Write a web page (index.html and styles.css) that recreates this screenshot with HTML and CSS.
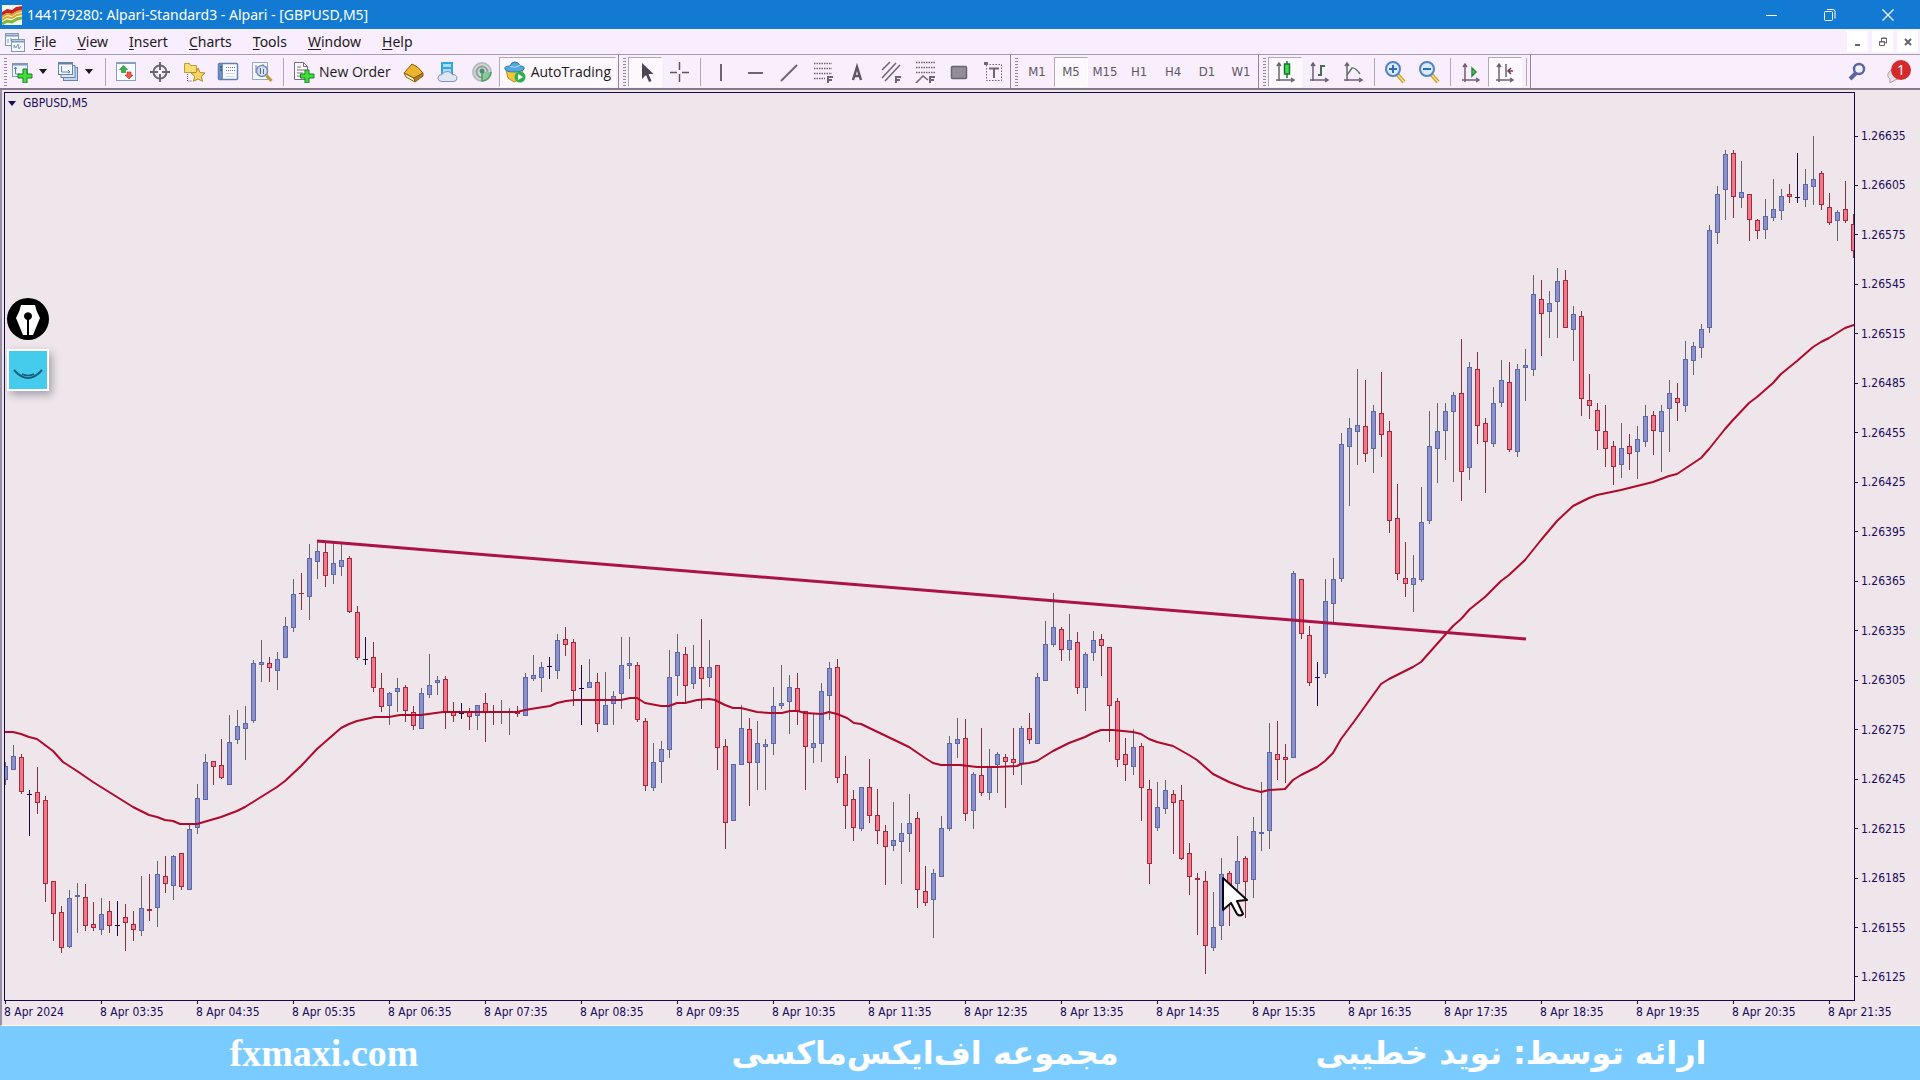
FILE: index.html
```html
<!DOCTYPE html>
<html lang="en">
<head>
  <meta charset="UTF-8">
  <meta name="viewport" content="width=device-width, initial-scale=1.0">
  <title>144179280: Alpari-Standard3 - Alpari - [GBPUSD,M5]</title>
  <link rel="stylesheet" href="styles.css">
</head>
<body>
  <header class="titlebar">
    <svg class="app-icon" width="20" height="20" viewBox="0 0 20 20">
      <rect width="20" height="20" fill="#f4f6e4"/>
      <path d="M0 7l5-3 5 1 4-3 6-1v4l-5 1-5 3-5-1-5 3z" fill="#c8202c"/>
      <path d="M0 12l5-3 5 1 5-3 5-1M0 15l5-3 5 1 5-3 5-1" stroke="#d8a82c" stroke-width="2" fill="none"/>
      <path d="M0 19l5-3 5 1 5-3 5-1" stroke="#7cb83c" stroke-width="3" fill="none"/>
    </svg>
    <h1>144179280: Alpari-Standard3 - Alpari - [GBPUSD,M5]</h1>
    <div class="window-buttons">
      <button aria-label="Minimize"><svg width="12" height="12"><path d="M0 6.5h11" stroke="#fff"/></svg></button>
      <button aria-label="Restore"><svg width="12" height="12" fill="none" stroke="#fff"><rect x=".5" y="2.5" width="8" height="9" rx="1"/><path d="M3 .5h6q2 0 2 2v7"/></svg></button>
      <button aria-label="Close"><svg width="12" height="12"><path d="M.5 .5l11 11M11.500 .5l-11 11" stroke="#fff" stroke-width="1.200"/></svg></button>
    </div>
  </header>

  <nav class="menubar">
    <svg class="menu-icon" width="20" height="20" viewBox="0 0 20 20" fill="#f6faff" stroke="#7d98bd">
      <rect x=".5" y="1.500" width="13" height="12"/><path d="M.5 3.500h13" stroke-width="2"/>
      <path d="M3 11V7M6 9V6"/>
      <rect x="6.500" y="7.500" width="13" height="12"/><path d="M6.500 9.500h13" stroke-width="2"/>
      <path d="M9 16v-3l2 3 2-4 1 5 2-3" fill="none"/>
    </svg>
    <button><u>F</u>ile</button>
    <button><u>V</u>iew</button>
    <button><u>I</u>nsert</button>
    <button><u>C</u>harts</button>
    <button><u>T</u>ools</button>
    <button><u>W</u>indow</button>
    <button><u>H</u>elp</button>
    <div class="child-buttons">
      <button aria-label="Minimize chart"><svg width="10" height="10"><path d="M2 8h5" stroke="#6a6270" stroke-width="2"/></svg></button>
      <button aria-label="Restore chart"><svg width="10" height="10" fill="none" stroke="#6a6270"><path d="M3.500 4V1h5v5H7M3 1.500h6"/><path d="M1.500 4.500h5v4h-5zM1 5h6"/></svg></button>
      <button aria-label="Close chart"><svg width="10" height="10"><path d="M2 2l6 6M8 2l-6 6" stroke="#6a6270" stroke-width="2"/></svg></button>
    </div>
  </nav>

  <div class="toolbar">
    <div class="group">
      <span class="grip"></span>
      <button class="drop" aria-label="New chart">
        <svg width="22" height="22" viewBox="0 0 22 22">
          <rect x="1.500" y="2.500" width="15" height="13" fill="#f2f6fc" stroke="#7d9ab8"/><path d="M1 3.500h16" stroke="#7d9ab8" stroke-width="2"/>
          <path d="M4.500 6v7h4M3 8l1.500-2L6 8" fill="none" stroke="#5c86a8"/>
          <path d="M12 8h4v5h5v4h-5v5h-4v-5H7v-4h5z" fill="#3fe03a" stroke="#1d7c22"/>
        </svg>
        <span class="arrow"></span>
      </button>
      <button class="drop" aria-label="Profiles">
        <svg width="22" height="22" viewBox="0 0 22 22" stroke="#6484ae">
          <rect x="6.500" y="6.500" width="14" height="13" fill="#c4d4ea"/>
          <rect x="4" y="4.500" width="14" height="12" fill="#dce6f4"/>
          <rect x="1.500" y="1.500" width="14" height="12" fill="#f4f8fd"/><path d="M1 2.500h15" stroke-width="2"/>
          <path d="M4.500 5v6h8M11 9l2 2-2 1" fill="none"/>
        </svg>
        <span class="arrow"></span>
      </button>
      <span class="sep"></span>
      <button aria-label="Market Watch">
        <svg width="22" height="22" viewBox="0 0 22 22">
          <rect x="1.500" y="1.500" width="19" height="18" fill="#f8fbff" stroke="#86a0c4"/><path d="M1 2h20" stroke="#86a0c4" stroke-width="2"/>
          <path d="M8.500 4.500l4 4h-2v3h-4v-3h-2z" fill="#35b548" stroke="#1b7a2a" stroke-width=".6"/>
          <path d="M14 18l4-4h-2v-3h-4v3h-2z" fill="#ee5a44" stroke="#a8281c" stroke-width=".6"/>
        </svg>
      </button>
      <button aria-label="Data Window">
        <svg width="22" height="22" viewBox="0 0 22 22" fill="none" stroke="#6c6872" stroke-width="2">
          <circle cx="11" cy="11" r="6.500"/><path d="M11 1v8M11 13v8M1 11h8M13 11h8"/>
        </svg>
      </button>
      <button aria-label="Navigator">
        <svg width="22" height="22" viewBox="0 0 22 22">
          <path d="M1.500 2.500h5l1 2h6v7h-12z" fill="#f7dd76" stroke="#c29a2c"/>
          <path d="M4.500 13v7h4" stroke="#555" stroke-dasharray="1 1" fill="none"/>
          <path d="M15 7l2 4.500 5 .5-3.700 3.300 1.200 5L15 18l-4.500 2.300 1.200-5L8 12l5-.5z" fill="#f9d667" stroke="#b98a22"/>
        </svg>
      </button>
      <button aria-label="Terminal">
        <svg width="22" height="22" viewBox="0 0 22 22">
          <rect x="1.500" y="2.500" width="19" height="16" rx="1" fill="#fbfdff" stroke="#5c7fb4" stroke-width="1.500"/>
          <path d="M4 3v15" stroke="#6c8fc8" stroke-width="4"/><path d="M3 6h2M3 9h2" stroke="#234"/>
          <path d="M9 6.500h9M9 9.500h9" stroke="#777" stroke-dasharray="1 1"/><path d="M9 12.500h9M9 15.500h9" stroke="#ccd6e6"/>
        </svg>
      </button>
      <button aria-label="Strategy Tester">
        <svg width="22" height="22" viewBox="0 0 22 22" fill="none">
          <rect x="1.500" y="1.500" width="15" height="17" fill="#f5f8fd" stroke="#9aa8c0"/>
          <path d="M5 4v8M8 6v7M12 3v5" stroke="#879" />
          <circle cx="11" cy="10" r="5.500" fill="#cfe0f6" fill-opacity=".8" stroke="#7a8fb8" stroke-width="1.500"/>
          <path d="M9.500 7v6M12.500 8v5" stroke="#667"/>
          <path d="M15.500 14.500l5 5.500" stroke="#c09a34" stroke-width="3"/>
        </svg>
      </button>
      <span class="sep"></span>
      <button class="text-button">
        <svg width="22" height="22" viewBox="0 0 22 22">
          <path d="M1.500 1.500h9l4 4v13h-13z" fill="#fbfbfd" stroke="#77707e"/><path d="M10.500 1.500v4h4M4 6h4M4 9h8M4 12h6M4 15h4" fill="none" stroke="#77707e"/>
          <path d="M12 9h4v4h5v4h-5v5h-4v-5H7.500v-4H12z" fill="#3fe03a" stroke="#1d7c22"/>
        </svg>
        New Order
      </button>
      <button aria-label="MetaEditor">
        <svg width="22" height="22" viewBox="0 0 22 22" stroke="#8a5e0c">
          <path d="M1 12l2 4 9 5-1-4z" fill="#fff3cf"/><path d="M1 12L9 3q6 2 11 9l-9 5z" fill="#edb32e"/><path d="M11 17l9-5v3l-8 6z" fill="#b57d14"/>
        </svg>
      </button>
      <button aria-label="Virtual Hosting">
        <svg width="22" height="22" viewBox="0 0 22 22">
          <path d="M4 1h12v12H4z" fill="#35a4e2"/><path d="M6 3h8v3H6zM6 8h8v4H6z" fill="#a8def8"/>
          <path d="M5 20.500q-4 0-4-3.500t4-3.500q2-3.500 6-3 3 0 4 3 5 0 5 3.500t-4 3.500z" fill="#dfe7f5" stroke="#7f93b8"/>
        </svg>
      </button>
      <button aria-label="Signals">
        <svg width="22" height="22" viewBox="0 0 22 22" fill="none">
          <circle cx="11" cy="11" r="9" fill="#d3d8d8" stroke="#b4bcbe" stroke-width="2"/><circle cx="11" cy="11" r="5.500" stroke="#8ea09c" stroke-width="2"/>
          <path d="M11 11v9q8-1 9-9" fill="#8cc69a" stroke="#4ca460" stroke-width="1.500"/><circle cx="11" cy="10" r="2.500" fill="#4f8a76"/>
        </svg>
      </button>
      <button class="text-button auto active">
        <svg width="22" height="22" viewBox="0 0 22 22">
          <path d="M2 9l2 8 6 4 7-3 2-9z" fill="#f5c63a" stroke="#b98c1c"/>
          <path d="M1 8q-1-3 5-3 1-4 5-4t5 4q5 0 4 3-2 3-10 3T1 8z" fill="#53a8dc" stroke="#2e78ac"/>
          <path d="M6 5.500q5 2 10-1" stroke="#b6e0f6" fill="none"/>
          <circle cx="16" cy="16" r="5.500" fill="#2eb14a"/><path d="M14 13v6l5-3z" fill="#fff"/>
        </svg>
        AutoTrading
      </button>
    </div>

    <div class="group">
      <span class="grip"></span>
      <button class="active" aria-label="Cursor"><svg width="22" height="22"><path d="M8 2v16l4-4 3 7 2.500-1-3-7h5z" fill="#4d4652"/></svg></button>
      <button aria-label="Crosshair"><svg width="22" height="22"><path d="M11.500 1v8M11.500 13v8M2 11.500h7M14 11.500h7" stroke="#5d5662" stroke-width="1.500"/></svg></button>
      <span class="sep"></span>
      <button aria-label="Vertical line"><svg width="22" height="22"><path d="M11 3v17" stroke="#6d6672" stroke-width="2"/></svg></button>
      <button aria-label="Horizontal line"><svg width="22" height="22"><path d="M4 12h15" stroke="#6d6672" stroke-width="2"/></svg></button>
      <button aria-label="Trendline"><svg width="22" height="22"><path d="M3 20L19 4" stroke="#6d6672" stroke-width="2"/></svg></button>
      <button aria-label="Fibonacci retracement"><svg width="22" height="22" stroke="#6d6672" fill="none"><path d="M2 2.500h18M2 7.500h18M2 12.500h18M2 17.500h11" stroke-width="1.500" stroke-dasharray="1.500 1"/><path d="M16 22v-6h5M16 19h4" stroke-width="2"/></svg></button>
      <button aria-label="Text"><svg width="22" height="22" fill="none" stroke="#5d5662" stroke-width="2.500"><path d="M7 19l4-13 4 13M8 15h6"/></svg></button>
      <button aria-label="Equidistant channel"><svg width="22" height="22" stroke="#6d6672" fill="none" stroke-width="1.500"><path d="M2 9l8-8M2 17L16 2M5 20L20 4"/><path d="M16 22v-6h5M16 19h4" stroke-width="2"/></svg></button>
      <button aria-label="Fibonacci fan"><svg width="22" height="22" stroke="#6d6672" fill="none"><path d="M2 1.500h19M2 6.500h19M2 11.500h19" stroke-width="1.500" stroke-dasharray="1.500 1"/><path d="M2 22l7-7 5 4" stroke-width="1.500"/><path d="M16 22v-6h5M16 19h4" stroke-width="2"/></svg></button>
      <button aria-label="Rectangle"><svg width="22" height="22"><rect x="3.500" y="5.500" width="15" height="12" rx="1" fill="#948c98" stroke="#6a6470" stroke-width="1.500"/></svg></button>
      <button aria-label="Text label"><svg width="22" height="22" fill="none" stroke="#6d6672"><path d="M4.500 3.500h15v16h-15z" stroke-dasharray="1.500 1.500"/><path d="M2 1h4v3H2z" fill="#6d6672" stroke="none"/><path d="M7 7.500h10M12 7v10" stroke-width="2"/></svg></button>
    </div>

    <div class="group periods">
      <span class="grip"></span>
      <button>M1</button>
      <button class="active">M5</button>
      <button>M15</button>
      <button>H1</button>
      <button>H4</button>
      <button>D1</button>
      <button>W1</button>
    </div>

    <div class="group">
      <span class="grip"></span>
      <button class="active" aria-label="Candlesticks"><svg width="22" height="22" fill="none" stroke="#6a6470" stroke-width="1.500"><path d="M5 2v18M2 19h18M3 5l2-3 2 3M17 17l3 2-3 2"/><path d="M13 0v17" stroke="#18762a"/><rect x="10.500" y="3" width="5" height="10" fill="#35e04a" stroke="#18762a"/></svg></button>
      <button aria-label="Bar chart"><svg width="22" height="22" fill="none" stroke="#6a6470" stroke-width="1.500"><path d="M5 2v18M2 19h18M3 5l2-3 2 3M17 17l3 2-3 2"/><path d="M13 4v11M10 14h3M13 5h4" stroke="#4a6a50" stroke-width="2"/></svg></button>
      <button aria-label="Line chart"><svg width="22" height="22" fill="none" stroke="#6a6470" stroke-width="1.500"><path d="M5 2v18M2 19h18M3 5l2-3 2 3M17 17l3 2-3 2"/><path d="M5 14l5-7q3-1 8 6" stroke="#5d7a62"/></svg></button>
      <span class="sep"></span>
      <button aria-label="Zoom in"><svg width="22" height="22" fill="none"><path d="M13 13l7 8" stroke="#c99c2a" stroke-width="4"/><path d="M13 13l7 8" stroke="#f8e48e" stroke-width="1.500"/><circle cx="9" cy="8" r="7" fill="#d8ecfc" stroke="#4f83c4" stroke-width="2"/><path d="M5 8h8M9 4v8" stroke="#2e6cb8" stroke-width="2"/></svg></button>
      <button aria-label="Zoom out"><svg width="22" height="22" fill="none"><path d="M13 13l7 8" stroke="#c99c2a" stroke-width="4"/><path d="M13 13l7 8" stroke="#f8e48e" stroke-width="1.500"/><circle cx="9" cy="8" r="7" fill="#d8ecfc" stroke="#4f83c4" stroke-width="2"/><path d="M5 8h8" stroke="#2e6cb8" stroke-width="2"/></svg></button>
      <span class="sep"></span>
      <button aria-label="Auto scroll"><svg width="22" height="22" fill="none" stroke="#6a6470" stroke-width="1.500"><path d="M5 3v18M2 19h17M3 6l2-3 2 3M16 17l3 2-3 2"/><path d="M12 7l4 4-4 4z" fill="#58c46a" stroke="#2a8a3c"/></svg></button>
      <button class="active" aria-label="Chart shift"><svg width="22" height="22" fill="none" stroke="#6a6470" stroke-width="1.500"><path d="M5 3v18M2 19h17M3 6l2-3 2 3M16 17l3 2-3 2M12 3v13"/><path d="M19 10h-5M17 7l-3 3 3 3" stroke="#7a3c4c"/></svg></button>
      <span class="tail"></span>
    </div>

    <div class="right-tools">
      <button aria-label="Search"><svg width="20" height="20" fill="none"><path d="M8 11l-6 6" stroke="#5c64a4" stroke-width="4"/><circle cx="11" cy="7" r="5" fill="#f4f4ff" stroke="#5c64a4" stroke-width="2.500"/></svg></button>
      <button class="messages" aria-label="Messages"><svg width="26" height="22"><path d="M4 18q-4-3-1-7 4-5 10-2l3 8-7 2-5 3z" fill="#e4dfe8" stroke="#a8a0ae"/></svg><span class="badge">1</span></button>
    </div>
  </div>

  <main class="chart">
    <div class="plot">
      <svg id="plot" viewBox="5 93 1849 907" preserveAspectRatio="none">
        <g id="candles" shape-rendering="crispEdges"></g>
        <polyline id="average" class="average"/>
        <line class="trend" x1="317" y1="541" x2="1526" y2="639"/>
        <path class="pointer" d="M1223 878v32l8-7 6 11q3 3 6 0l-6-13 10-1z"/>
      </svg>
      <div class="symbol"><span class="arrow"></span>GBPUSD,M5</div>
      <div class="widgets">
        <button class="pen" aria-label="Pen">
          <svg width="42" height="42" viewBox="0 0 42 42">
            <circle cx="21" cy="21" r="21"/>
            <path d="M14 7h14q1 6 5 13l-7 17h-4V22a4 4 0 1 0-2 0v15h-4L9 20q4-7 5-13z" fill="#fff"/>
          </svg>
        </button>
        <button class="board" aria-label="Board">
          <svg width="38" height="38" viewBox="0 0 38 38" fill="none" stroke="#175f7c">
            <path d="M5 19q14 16 28 0" stroke-width="2"/><path d="M13 23q6 3 12 0" stroke-width="1.500"/>
          </svg>
        </button>
      </div>
    </div>
    <ol class="prices" id="prices"></ol>
    <ol class="times" id="times"></ol>
  </main>

  <footer>
    <a href="#">fxmaxi.com</a>
    <span lang="fa" dir="rtl">مجموعه اف‌ایکس‌ماکسی</span>
    <span lang="fa" dir="rtl">ارائه توسط: نوید خطیبی</span>
  </footer>

  <script src="chart.js"></script>
</body>
</html>
```
FILE: styles.css
```css
* {
  box-sizing: border-box;
}
body {
  margin: 0;
  min-height: 100vh;
  display: flex;
  flex-direction: column;
  font-family: "Open Sans", "Noto Sans", sans-serif;
  font-size: 14px;
  color: #1c1820;
  background-color: #eee6ea;
}
button {
  margin: 0;
  padding: 0;
  border: 0;
  background: none;
  font: inherit;
  color: inherit;
}
svg {
  display: block;
  flex: none;
}
ol {
  margin: 0;
  padding: 0;
  list-style: none;
}
.arrow {
  border: 4px solid transparent;
  border-top: 5px solid #1c1820;
  border-bottom: 0;
}

/* title bar */
.titlebar {
  display: flex;
  align-items: center;
  height: 29px;
  padding: 0 3px 0 2px;
  color: #fff;
  background-color: #127ad2;
}
.titlebar h1 {
  margin: 0 0 0 5px;
  font-family: "Noto Sans", sans-serif;
  font-size: 14px;
  font-weight: normal;
}
.window-buttons {
  display: flex;
  margin-left: auto;
}
.window-buttons button {
  display: flex;
  justify-content: center;
  width: 58px;
}
.window-buttons svg {
  overflow: visible;
}

/* menu */
.menubar {
  display: flex;
  align-items: center;
  gap: 21px;
  height: 25px;
  padding: 0 2px 0 5px;
  font-family: "Noto Sans", sans-serif;
  background-color: #f9eefd;
}
.menu-icon {
  margin-right: -12px;
}
.menubar u {
  text-underline-offset: 2px;
}
.child-buttons {
  display: flex;
  gap: 4px;
  margin-left: auto;
}
.child-buttons button {
  display: flex;
  align-items: center;
  justify-content: center;
  width: 21px;
  height: 21px;
  background-color: #fff;
}

/* toolbar */
.toolbar {
  display: flex;
  height: 36px;
  border-top: 1px solid #a59bab;
  border-bottom: 2px solid #857b8a;
  background-color: #f9eefb;
}
.group {
  display: flex;
  align-items: center;
  border-right: 1px solid #91879a;
}
.group button {
  display: flex;
  align-items: center;
  justify-content: center;
  width: 34px;
  height: 30px;
}
.group .active {
  border: 1px solid #b2a8b7;
  border-right-color: #fff;
  border-bottom-color: #fff;
  background-color: #fdf8fe;
}
.grip {
  width: 3px;
  height: 28px;
  margin: 0 2px 0 4px;
  background: repeating-linear-gradient(#91879a 0 1px, transparent 1px 3px);
}
.sep,
.tail {
  width: 8px;
  height: 28px;
  background: linear-gradient(#b2a8b7, #b2a8b7) center / 1px 100% no-repeat;
}
.group .drop {
  justify-content: flex-start;
  gap: 6px;
  width: 46px;
  padding-left: 2px;
}
.group .text-button {
  gap: 4px;
  width: auto;
  padding: 0 6px;
}
.group .auto {
  gap: 5px;
  padding: 0 4px;
  margin-right: 2px;
}
.periods {
  font-family: "DejaVu Sans Condensed", "DejaVu Sans", sans-serif;
  font-size: 13px;
  color: #5f5664;
}
.right-tools {
  display: flex;
  align-items: center;
  gap: 18px;
  margin-left: auto;
  padding-right: 8px;
}
.messages {
  position: relative;
}
.badge {
  position: absolute;
  top: -1px;
  right: 1px;
  width: 20px;
  height: 20px;
  border-radius: 50%;
  background-color: #d32a2c;
  color: #fff;
  line-height: 20px;
  text-align: center;
}

/* chart */
.chart {
  flex: 1;
  display: grid;
  grid-template-columns: 1fr 65px;
  grid-template-rows: 1fr 24px;
  padding-top: 2px;
  border-left: 2px solid #9890a4;
  border-bottom: 1px solid #fff;
  font-family: "DejaVu Sans Condensed", "DejaVu Sans", sans-serif;
  font-size: 12px;
  line-height: 16px;
  color: #1a0a5c;
}
.plot {
  position: relative;
  margin-left: 2px;
  border: 1px solid #14084a;
}
.plot > svg {
  position: absolute;
  width: 100%;
  height: 100%;
}
.wick {
  fill: #66646e;
}
.body {
  fill: #8b8fca;
  stroke: #5c68a6;
}
.down .wick {
  fill: #86303f;
}
.down .body {
  fill: #ee7888;
  stroke: #a42a40;
}
.flat .wick {
  fill: #1a0a44;
}
.average {
  fill: none;
  stroke: #ae0a2c;
  stroke-width: 2;
  stroke-linejoin: round;
}
.trend {
  stroke: #aa1248;
  stroke-width: 3;
}
.pointer {
  fill: #fff;
  stroke: #0c0810;
  stroke-width: 2;
  stroke-linejoin: round;
}
.symbol {
  position: absolute;
  top: 2px;
  left: 3px;
  display: flex;
  align-items: center;
  gap: 7px;
}
.symbol .arrow {
  border-top-color: #1a0a5c;
}
.widgets {
  position: absolute;
  top: 205px;
  left: 2px;
  display: flex;
  flex-direction: column;
  align-items: center;
  gap: 9px;
}
.board {
  border: 2px solid #fff;
  background-color: #45cbec;
  box-shadow: 3px 4px 8px #a79fae;
}
.prices {
  display: flex;
  flex-direction: column;
  justify-content: space-between;
  padding: 36px 0 16px;
}
.prices li {
  display: flex;
  align-items: center;
  gap: 3px;
}
.prices li::before {
  content: "";
  width: 3px;
  height: 1px;
  background-color: #1a0a5c;
}
.times {
  grid-column: 1 / 3;
  display: grid;
  grid-template-columns: repeat(20, 1fr);
  margin-left: -2px;
  white-space: nowrap;
}
.times li {
  padding-left: 4px;
}
.times li::before {
  content: "";
  display: block;
  width: 1px;
  height: 3px;
  margin-left: 1px;
  background-color: #1a0a5c;
}

/* banner */
footer {
  display: grid;
  grid-template-columns: 648fr 554fr 618fr 100fr;
  align-items: center;
  justify-items: center;
  height: 54px;
  color: #fff;
  background-color: #7acbff;
  font-family: "DejaVu Sans", sans-serif;
  font-size: 32px;
  font-weight: bold;
  line-height: 54px;
  white-space: nowrap;
}
footer a {
  color: inherit;
  text-decoration: none;
  font-family: "Liberation Serif", serif;
  font-size: 38px;
}
```
FILE: chart.js
```js
// high, body top, body bottom, low, direction (1 up, -1 down, 0 flat)
const candles = [
  [762,766,780,785,1],[745,756,770,770,1],[754,757,792,794,-1],[790,794,794,836,0],[767,792,803,814,-1],
  [796,800,884,902,-1],[881,881,914,941,-1],[906,912,948,953,-1],[890,898,947,948,1],[883,895,897,933,1],
  [884,897,926,931,-1],[902,924,928,931,-1],[898,914,930,935,1],[901,911,926,933,-1],[901,925,925,936,0],
  [904,917,923,951,-1],[911,924,930,941,-1],[876,908,931,936,1],[874,909,911,921,-1],[861,874,908,927,1],
  [856,876,884,893,-1],[855,856,886,900,1],[853,853,887,890,-1],[824,829,890,890,1],[784,798,828,834,1],
  [754,762,800,800,1],[761,761,767,785,-1],[739,765,778,779,-1],[715,742,785,785,1],[710,726,740,744,1],
  [706,723,729,760,1],[660,663,721,723,1],[640,662,665,682,1],[657,663,668,682,-1],[652,659,671,690,1],
  [617,626,658,658,1],[579,594,628,632,1],[573,593,594,610,-1],[544,558,597,620,1],[541,551,562,579,1],
  [542,552,576,587,-1],[541,563,575,584,1],[542,560,567,576,1],[556,558,612,613,-1],[606,612,658,660,-1],
  [637,659,659,665,0],[642,657,688,692,-1],[673,688,707,712,-1],[692,693,706,725,1],[678,688,692,712,1],
  [685,687,711,722,-1],[706,712,726,730,-1],[688,693,729,729,1],[654,685,695,698,1],[676,680,683,695,1],
  [676,679,712,729,-1],[702,712,716,722,-1],[703,713,713,719,0],[708,712,717,730,-1],[705,705,716,730,1],
  [693,703,712,742,-1],[705,712,713,725,-1],[700,712,713,724,1],[708,712,713,735,1],[706,711,714,717,-1],
  [673,677,716,716,1],[655,675,679,681,1],[662,667,678,692,1],[657,666,666,679,0],[634,640,671,679,1],
  [627,639,645,656,-1],[639,642,691,706,-1],[665,688,688,725,0],[659,682,688,688,1],[673,682,724,732,-1],
  [672,705,725,725,1],[691,696,704,725,1],[637,665,694,709,1],[637,663,666,679,1],[662,665,720,722,-1],
  [718,721,786,791,-1],[743,762,788,791,1],[741,749,762,783,1],[650,677,750,758,1],[634,652,676,696,1],
  [647,654,686,702,-1],[645,667,684,689,1],[619,667,679,709,-1],[640,667,678,687,1],[665,665,748,770,-1],
  [739,746,823,849,-1],[764,764,821,821,1],[705,728,765,765,1],[718,729,763,806,-1],[721,743,763,790,1],
  [739,744,747,790,1],[687,706,744,755,1],[665,703,706,709,1],[675,687,702,734,1],[673,688,712,725,-1],
  [711,711,747,790,-1],[713,743,748,763,1],[683,691,744,762,1],[662,668,696,720,1],[659,667,778,783,-1],
  [756,774,806,829,-1],[790,799,828,841,-1],[787,787,829,831,1],[759,787,816,823,-1],[789,815,831,844,-1],
  [825,831,847,885,-1],[802,840,846,851,1],[823,833,842,884,1],[794,823,834,852,1],[812,818,890,908,-1],
  [866,891,903,906,-1],[869,873,900,938,1],[816,828,877,877,1],[736,743,829,831,1],[718,739,744,758,1],
  [719,738,814,821,-1],[772,774,811,829,1],[728,775,793,796,-1],[749,767,793,800,1],[752,754,765,793,1],
  [754,757,762,808,-1],[728,759,763,775,-1],[726,728,764,785,1],[713,728,740,744,-1],[673,677,744,744,1],
  [621,644,681,681,1],[593,627,645,647,1],[627,629,650,661,-1],[614,640,650,661,1],[632,642,688,694,-1],
  [652,654,688,711,1],[631,640,653,661,1],[634,639,646,676,-1],[647,647,706,742,-1],[698,701,760,767,-1],
  [738,754,765,781,-1],[729,747,767,775,1],[743,746,788,821,-1],[780,789,864,884,-1],[782,807,828,831,1],
  [780,790,809,814,1],[790,794,803,854,-1],[785,800,859,860,-1],[843,853,877,895,-1],[873,878,880,935,-1],
  [871,881,946,974,-1],[892,927,948,951,1],[858,874,926,940,1],[871,873,893,926,-1],[836,861,884,905,1],
  [856,858,882,918,-1],[817,831,880,898,1],[782,832,834,851,1],[723,752,831,849,1],[721,754,760,780,-1],
  [744,757,760,783,-1],[571,573,758,758,1],[579,579,634,639,-1],[626,635,683,686,-1],[662,677,677,706,0],
  [579,601,674,678,1],[558,579,604,622,1],[433,444,579,582,1],[418,428,447,506,1],[369,425,432,465,1],
  [380,426,454,462,-1],[405,411,449,473,1],[372,413,435,457,-1],[421,431,521,533,-1],[484,518,574,580,-1],
  [542,578,584,597,-1],[555,578,585,612,1],[487,522,580,582,1],[411,446,521,524,1],[403,431,449,483,1],
  [403,411,431,460,1],[392,395,412,482,1],[339,393,472,501,-1],[362,367,468,480,1],[352,369,426,444,-1],
  [418,423,442,493,-1],[387,403,444,447,1],[360,380,403,407,1],[362,382,450,452,-1],[364,369,452,457,1],
  [349,365,368,401,1],[275,294,370,376,1],[280,299,314,356,-1],[291,303,312,338,1],[268,281,302,338,1],
  [270,280,328,328,-1],[306,314,330,361,1],[311,316,399,416,-1],[374,400,406,419,-1],[403,410,431,450,-1],
  [405,431,449,467,-1],[441,446,467,485,-1],[423,448,465,478,1],[434,446,454,470,-1],[426,439,452,479,1],
  [405,416,442,447,1],[411,415,431,455,-1],[405,411,432,472,1],[380,393,409,452,1],[383,398,403,421,-1],
  [341,359,406,412,1],[342,346,361,375,1],[324,329,348,358,1],[225,230,328,333,1],[186,194,233,244,1],
  [150,154,190,220,1],[150,153,197,218,-1],[161,192,198,208,1],[194,194,220,241,-1],[219,220,231,239,-1],
  [199,216,230,239,1],[179,209,218,221,1],[189,196,211,220,1],[184,194,197,203,-1],[153,197,197,203,0],
  [169,184,200,207,1],[136,179,187,205,1],[171,173,205,210,-1],[193,207,223,225,-1],[210,212,221,241,1],
  [181,209,221,223,-1],[214,224,251,258,-1]
];

const average = `5,732 13,732 21,734 29,737 37,739 53,751 63,762 77,771 93,782 117,797 133,807 149,815 157,817
  165,820 173,821 180,824 197,824 221,817 237,811 245,807 261,797 277,787 285,781 301,766 317,749 341,728
  349,724 357,721 375,717 389,717 400,715 421,715 443,712 480,712 517,712 525,710 537,708 550,706 557,703
  566,701 575,700 621,700 630,698 637,698 645,703 661,706 669,706 677,703 685,703 697,700 709,699 715,700
  725,705 733,708 741,708 757,712 770,713 782,713 790,711 798,711 805,713 822,714 829,712 837,714 847,718
  854,723 861,724 909,747 925,758 933,763 941,765 960,765 977,767 997,767 1017,766 1021,764 1029,763
  1037,761 1045,756 1053,751 1069,743 1077,740 1085,737 1093,733 1101,730 1113,730 1133,732 1141,734
  1149,739 1157,742 1173,746 1189,755 1197,760 1213,774 1221,778 1229,782 1245,788 1261,792 1269,790
  1285,789 1293,780 1301,775 1317,767 1325,761 1333,753 1341,739 1353,723 1381,684 1389,679 1397,675
  1413,667 1421,662 1429,653 1445,635 1453,626 1461,619 1470,609 1485,597 1501,581 1509,575 1525,560
  1541,540 1557,521 1573,506 1589,498 1597,495 1621,490 1653,482 1669,476 1677,474 1701,458 1709,449
  1725,429 1733,420 1749,403 1757,397 1773,383 1781,374 1797,361 1813,347 1821,342 1829,338 1845,328 1854,325`;

const names = { '1': 'up', '-1': 'down', '0': 'flat' };
const step = 8;

document.getElementById('candles').innerHTML = candles.map(([high, top, bottom, low, dir], i) => {
  const x = 5 + i * step;
  const wick = `<rect class="wick" x="${x}" y="${high}" width="1" height="${low - high}"/>`;
  const body = bottom - top > 1
    ? `<rect class="body" x="${x - 1.5}" y="${top + 0.5}" width="4" height="${bottom - top - 1}"/>`
    : `<rect class="wick" x="${x - 2}" y="${top}" width="5" height="1"/>`;
  return `<g class="${names[dir]}">${wick}${body}</g>`;
}).join('');

document.getElementById('average').setAttribute('points', average);

let prices = '';
for (let p = 126635; p >= 126125; p -= 30) {
  prices += `<li>${(p / 100000).toFixed(5)}</li>`;
}
document.getElementById('prices').innerHTML = prices;

let times = '<li>8 Apr 2024</li>';
for (let h = 3; h <= 21; h++) {
  times += `<li>8 Apr ${String(h).padStart(2, '0')}:35</li>`;
}
document.getElementById('times').innerHTML = times;
```
